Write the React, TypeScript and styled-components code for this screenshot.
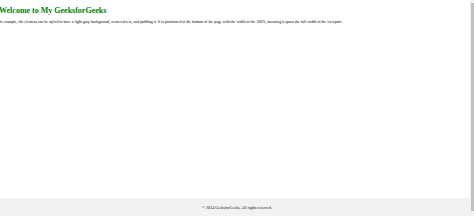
import styled, { createGlobalStyle } from "styled-components";

const GlobalStyle = createGlobalStyle`
  html, body {
    margin: 0;
    padding: 0;
    height: 100%;
    overflow: hidden;
    background: #ffffff;
  }
  #root {
    height: 100%;
  }
`;

const Page = styled.div`
  position: relative;
  height: 216px;
  display: flex;
  flex-direction: column;
  font-family: "Liberation Serif", "Times New Roman", serif;
  color: #000;
`;

const Main = styled.main`
  flex: 1;
  margin-left: -1px;
`;

const Title = styled.h1`
  color: #008000;
  font-size: 8px;
  font-weight: bold;
  margin: 6px 0 4px;
  line-height: 9px;
`;

const Text = styled.p`
  font-size: 3.95px;
  margin: 0;
  line-height: 5px;
  white-space: nowrap;
`;

const Footer = styled.footer`
  height: 18px;
  background-color: #f2f2f2;
  display: flex;
  align-items: center;
  justify-content: center;
  font-size: 4px;
  color: #111;
`;

const ScrollTrack = styled.div`
  position: absolute;
  top: 0;
  right: 0;
  width: 4px;
  height: 216px;
  background: #f1f1f1;
`;

const ScrollThumb = styled.div`
  position: absolute;
  top: 3px;
  right: 0;
  width: 3px;
  height: 208px;
  background: #c1c1c1;
`;

export default function App() {
  return (
    <>
      <GlobalStyle />
      <Page>
        <Main>
          <Title>Welcome to My GeeksforGeeks</Title>
          <Text>
            In example, the element can be styled to have a light gray
            background, centered text, and padding it. It is positioned at the
            bottom of the page with the width of the 100%, meaning it spans the
            full width of the viewport.
          </Text>
        </Main>
        <Footer>© 2024 GeeksforGeeks. All rights reserved.</Footer>
        <ScrollTrack />
        <ScrollThumb />
      </Page>
    </>
  );
}
